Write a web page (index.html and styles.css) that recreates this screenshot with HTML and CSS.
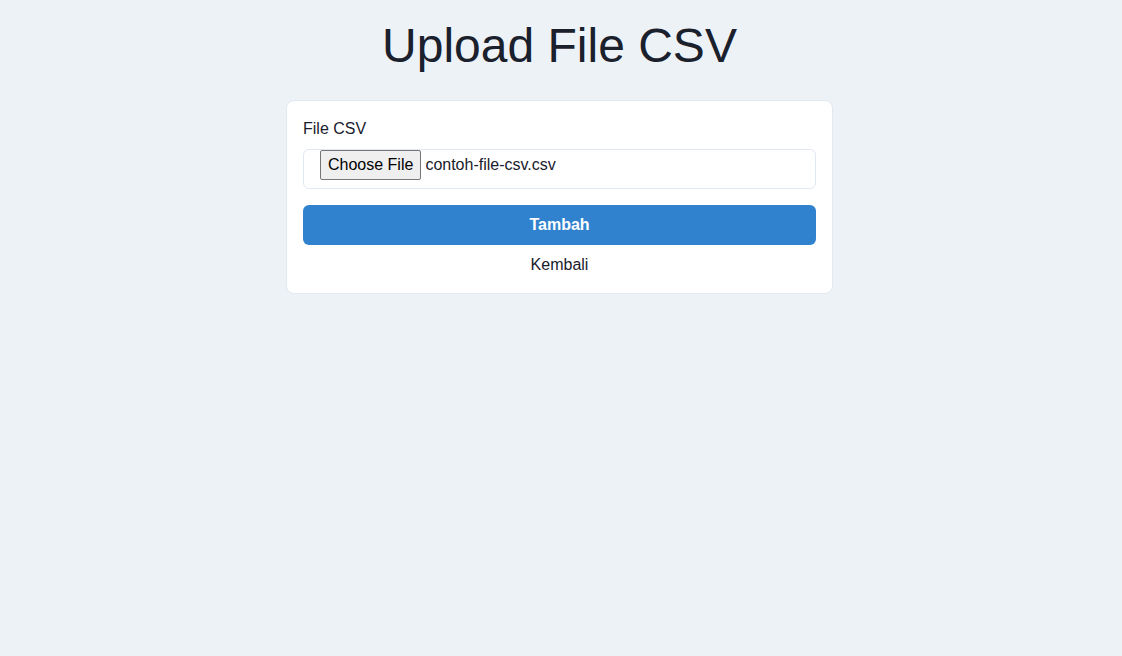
FILE: index.html
```html
<!DOCTYPE html>
<html lang="id">
<head>
<meta charset="utf-8">
<title>Upload File CSV</title>
<link rel="stylesheet" href="styles.css">
</head>
<body>
<main class="page">
  <h1 class="title">Upload File CSV</h1>
  <form class="card">
    <label class="label">File CSV</label>
    <div class="file-input">
      <button type="button" class="file-btn">Choose File</button>
      <span class="file-name">contoh-file-csv.csv</span>
    </div>
    <button type="button" class="submit">Tambah</button>
    <a class="back">Kembali</a>
  </form>
</main>
</body>
</html>
```
FILE: styles.css
```css
* { box-sizing: border-box; }
html, body {
  margin: 0;
  padding: 0;
  background: #edf2f7;
  font-family: "Liberation Sans", Arial, sans-serif;
  color: #1a202c;
}
.page {
  display: flex;
  flex-direction: column;
  align-items: center;
  padding-top: 17px;
  padding-right: 3px;
}
.title {
  margin: 0 0 25px;
  font-size: 48px;
  font-weight: 400;
  line-height: 58px;
  color: #1a202c;
}
.card {
  width: 547px;
  background: #fff;
  border: 1px solid #e2e8f0;
  border-radius: 8px;
  padding: 16px;
  display: flex;
  flex-direction: column;
}
.label {
  font-size: 16px;
  line-height: 24px;
  margin-bottom: 8px;
}
.file-input {
  height: 40px;
  border: 1px solid #e2e8f0;
  border-radius: 6px;
  padding: 0 16px;
  display: flex;
  align-items: flex-start;
  font-size: 16px;
}
.file-btn {
  height: 30px;
  padding: 1px 7px;
  border: 1px solid #767676;
  border-radius: 2px;
  background: #efefef;
  color: #000;
  font-family: "Liberation Sans", Arial, sans-serif;
  font-size: 16px;
}
.file-name {
  margin-left: 4px;
  line-height: 30px;
  color: #1a202c;
}
.submit {
  margin-top: 16px;
  height: 40px;
  border: none;
  border-radius: 6px;
  background: #3182ce;
  color: #fff;
  font-family: "Liberation Sans", Arial, sans-serif;
  font-size: 16px;
  font-weight: 700;
}
.back {
  margin-top: 8px;
  text-align: center;
  font-size: 16px;
  line-height: 24px;
  color: #1a202c;
}
```
